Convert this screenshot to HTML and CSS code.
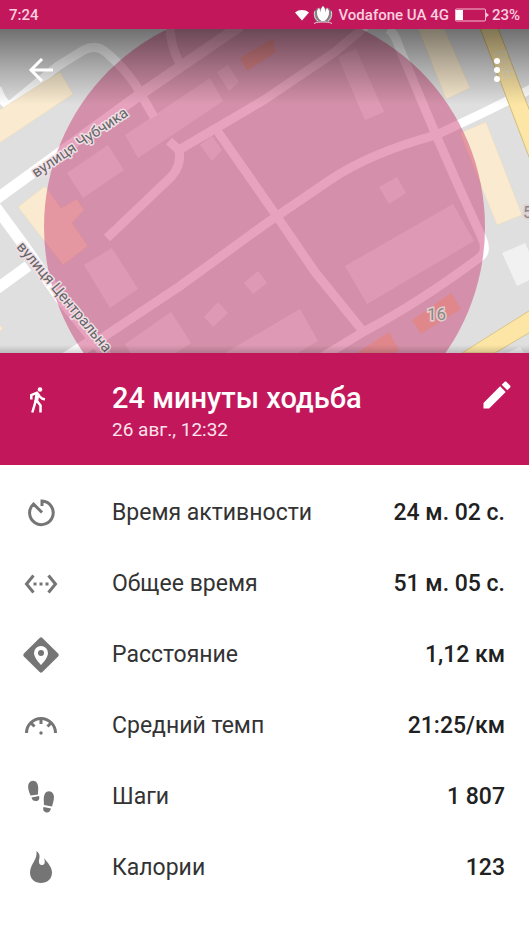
FILE: index.html
```
<!DOCTYPE html>
<html lang="ru">
<head>
  <meta charset="UTF-8">
  <meta name="viewport" content="width=device-width, initial-scale=1">
  <title>24 минуты ходьба</title>
  <link rel="stylesheet" href="styles.css">
</head>
<body>
  <div class="statusbar">
    <span class="time">7:24</span>
    <div class="status-right">
      <svg class="wifi" width="14" height="12" viewBox="0 0 14 12"><path d="M0 3.500C4 .2 10 .2 14 3.500L7 11.500z" fill="#fff"/></svg>
      <svg class="lotus" width="20" height="20" viewBox="0 0 20 20">
        <path d="M1 6Q0 14 4 17h12q4-3 3-11l-2-1-1-2-3 1-3-3-3 3-3-1-1 2z" fill="#8c7f86"/>
        <path d="M10 1c3 3 4 10 1 15H9C6 11 7 4 10 1z" fill="#fff"/>
        <path d="M6 2.500C3 7 4 13 8.500 16 7 11 8 6 6 2.500zM14 2.500c3 4.500 2 10.500-2.500 13.500 1.500-5 .5-10 2.500-13.500z" fill="#fff"/>
        <path d="M4 5c0 5 1 8 5 11h2c4-3 5-6 5-11l-3 2H7z" fill="#fff"/>
        <path d="M1.500 6.500C1 11 2 14 5 16M18.500 6.500C19 11 18 14 15 16M1 18.500c4-2 6-1 7-1.500h4c1 .5 3-.5 7 1.500" stroke="#e3d5db" fill="none"/>
      </svg>
      <span class="carrier">Vodafone UA 4G</span>
      <svg class="battery" width="34" height="14" viewBox="0 0 34 14">
        <rect x=".5" y="1" width="30" height="12" rx="1" fill="none" stroke="#f7bdd5"/>
        <rect x="1" y="2" width="7" height="10" fill="#fff"/>
        <path d="M31 4.500l3 2.500-3 2.500z" fill="#f7bdd5"/>
      </svg>
      <span>23%</span>
    </div>
  </div>

  <div class="map">
    <svg class="map-canvas" viewBox="0 29 529 324" preserveAspectRatio="xMidYMid slice">
      <defs>
        <linearGradient id="shade" x1="0" y1="0" x2="0" y2="1">
          <stop offset="0" stop-color="#000" stop-opacity=".5"/>
          <stop offset=".5" stop-color="#000" stop-opacity=".24"/>
          <stop offset="1" stop-color="#000" stop-opacity="0"/>
        </linearGradient>
        <linearGradient id="edge" x1="0" y1="0" x2="0" y2="1">
          <stop offset="0" stop-color="#000" stop-opacity="0"/>
          <stop offset="1" stop-color="#000" stop-opacity=".16"/>
        </linearGradient>
      </defs>
      <rect y="29" width="529" height="324" fill="#dfdfdf"/>

      <!-- buildings -->
      <g fill="#f1f1f1">
        <path d="M125 135L210 78l13 23-85 57z"/>
        <path d="M217 72l11-7 11 17-10 9z"/>
        <path d="M200 145l12-9 10 14-10 11z"/>
        <path d="M67 173l41-28 16 25-41 28z"/>
        <path d="M338 57l18-8 28 63-19 8z"/>
        <path d="M379 187l18-10 9 16-17 11z"/>
        <path d="M345 266l108-62 21 37-107 63z"/>
        <path d="M225 353l75-44 18 32-20 12z"/>
        <path d="M244 283l14-12 9 12-14 11z"/>
        <path d="M204 317l14-15 10 11-15 14z"/>
        <path d="M125 344l46-32 20 31-15 10h-46z"/>
        <path d="M84 265l28-17 26 41-28 19z"/>
        <path d="M502 253l23-10 15 32-23 11z"/>
        <path d="M507 353l13-6 4 6z"/>
      </g>

      <!-- roads -->
      <g class="roads">
        <path d="M-3 88Q4 108 12 104L58 66 84 50Q97 43 108 54 124 68 135 84L154 117"/>
        <path class="wide" d="M-5 200L142 93 240 26"/>
        <path d="M170 29Q171 47 180 64"/>
        <path d="M169 141L179 150 264 100 335 52 368 24"/>
        <path d="M179 150Q182 165 171 177L107 238"/>
        <path d="M218 132L278 218 315 272 362 330"/>
        <path d="M388 29Q395 33 399 47L436 135 458 185 482 238Q488 252 479 258 420 302 365 331L322 357"/>
        <path d="M535 87L485 112 436 135Q370 153 330 180L264 225 180 286 72 358"/>
        <path class="wide" d="M-5 206L25 247 60 298 110 360"/>
        <path class="wide" d="M-5 290L28 266"/>
        <path d="M60 360L88 342"/>
      </g>

      <g fill="#faebd0" stroke="#eadab8" stroke-width=".5">
        <path d="M-2 111L60 72l13 22L-2 144z"/>
        <path d="M18 207l27-21 16 22 16-9 7 11-12 13 16 23-25 19z"/>
        <path d="M418 28h26l26 60-24 11z"/>
        <path d="M460 133l26-11 36 93-25 10z"/>
        <path d="M-2 324l5 4-5 6z"/>
      </g>
      <g fill="#f3d0ae">
        <path d="M240 58l33-20 3 14-29 19z"/>
        <path d="M412 320l39-27 10 16-40 25z"/>
        <path d="M357 353l32-21 10 18-4 3z"/>
      </g>

      <path d="M480 28h18l36 94v48z" fill="#fde6a5" stroke="#d3bd7c"/>
      <path d="M462 353L532 309v22l-37 22z" fill="#fde6a5" stroke="#d8c58b"/>

      <circle cx="264.500" cy="227" r="220.500" fill="#c2185b" fill-opacity=".4"/>

      <g class="street">
        <text transform="translate(36 178) rotate(-34)">вулиця Чубчика</text>
        <text transform="translate(16 247) rotate(50)">вулиця Центральна</text>
      </g>
      <text class="house" x="427" y="320">16</text>
      <text class="house" x="523" y="218">5</text>
      <text class="route" transform="translate(494 52) rotate(70)">P06</text>

      <rect y="29" width="529" height="76" fill="url(#shade)"/>
      <rect y="345" width="529" height="8" fill="url(#edge)"/>
    </svg>

    <div class="toolbar">
      <button class="icon-btn" aria-label="Назад">
        <svg width="26" height="24" viewBox="0 0 26 24"><path d="M14 1L3 12l11 11M3 12h22" fill="none" stroke="#fff" stroke-width="3"/></svg>
      </button>
      <button class="icon-btn" aria-label="Ещё">
        <svg width="8" height="24" viewBox="0 0 8 24" fill="#fff"><circle cx="4" cy="3" r="3"/><circle cx="4" cy="12" r="3"/><circle cx="4" cy="21" r="3"/></svg>
      </button>
    </div>
  </div>

  <header class="summary">
    <div class="activity">
      <svg width="28" height="28" viewBox="0 0 28 28" fill="none" stroke="#fff" stroke-width="2.500">
        <circle cx="16" cy="3.500" r="2.300" fill="#fff" stroke="none"/>
        <path d="M7.300 13.500V9l5.700-2.300 2.700 3.800q2 2.500 5.300 2.800"/>
        <path d="M11.500 6.500L15.500 8 14 16l-4 1.500z" fill="#fff" stroke="none"/>
        <path d="M12 14L8.300 26.500M13 15l3.500 4.500v7"/>
      </svg>
    </div>
    <div class="headline">
      <h1>24 минуты ходьба</h1>
      <p>26 авг., 12:32</p>
    </div>
    <button class="icon-btn edit" aria-label="Изменить">
      <svg width="36" height="36" viewBox="0 0 24 24" fill="#fff"><path d="M3 17.250V21h3.750L17.810 9.940l-3.750-3.750L3 17.250zM20.710 7.040c.39-.39.39-1.020 0-1.410l-2.340-2.340c-.39-.39-1.020-.39-1.410 0l-1.830 1.830 3.750 3.750 1.830-1.830z"/></svg>
    </button>
  </header>

  <dl class="stats">
    <div class="stat">
      <dt>
        <svg width="36" height="36" viewBox="0 0 36 36"><path d="M19 17.500L10.500 9A11.800 11.800 0 1 0 19 6v5" fill="none" stroke="#757575" stroke-width="3"/></svg>
        Время активности
      </dt>
      <dd>24 м. 02 с.</dd>
    </div>
    <div class="stat">
      <dt>
        <svg width="36" height="36" viewBox="0 0 36 36"><path d="M10.500 9.500L3.500 18l7 8.500M25.500 9.500l7 8.500-7 8.500" fill="none" stroke="#757575" stroke-width="3"/><path d="M10.500 16.500h3v3h-3zM16.500 16.500h3v3h-3zM22.500 16.500h3v3h-3z" fill="#757575"/></svg>
        Общее время
      </dt>
      <dd>51 м. 05 с.</dd>
    </div>
    <div class="stat">
      <dt>
        <svg width="36" height="36" viewBox="0 0 36 36"><path d="M16.600.9q1.400-1.200 2.800 0l15.700 15.700q1.200 1.400 0 2.800L19.400 35.100q-1.400 1.200-2.800 0L.9 19.400q-1.200-1.400 0-2.800z" fill="#757575"/><path d="M18 9a7 7 0 0 0-7 7c0 5 7 12 7 12s7-7 7-12a7 7 0 0 0-7-7z" fill="#fff"/><circle cx="18" cy="16" r="3" fill="#757575"/></svg>
        Расстояние
      </dt>
      <dd>1,12 км</dd>
    </div>
    <div class="stat">
      <dt>
        <svg width="36" height="36" viewBox="0 0 36 36"><path d="M3.500 25a14.500 14.500 0 0 1 29 0" fill="none" stroke="#757575" stroke-width="3"/><path d="M18 11v5M7.500 14.500l4 4M28.500 14.500l-4 4" stroke="#757575" stroke-width="3"/><circle cx="18" cy="25" r="1.700" fill="#757575"/></svg>
        Средний темп
      </dt>
      <dd>21:25/км</dd>
    </div>
    <div class="stat">
      <dt>
        <svg width="36" height="36" viewBox="0 0 36 36" fill="#757575"><path d="M7.500 16.500C5.500 12 4.500 8 5.500 5 7 1 12 .5 14 4c2 4 1 7 1 11.500zM8.500 18.500l7.500-1.500c1 3-.5 5-3 5-2.300.2-4-1-4.500-3.500z"/><path d="M29 27.500c1.500-5 2.700-9 1.500-12-1.500-4-6.500-4.500-8.500-1-2 4-1 7-1 11.500zM28 29.500l-7.500-1.500c-1 3 .5 5 3 5.500 2.300.2 4-1.500 4.500-4z"/></svg>
        Шаги
      </dt>
      <dd>1 807</dd>
    </div>
    <div class="stat">
      <dt>
        <svg width="36" height="36" viewBox="0 0 36 36" fill="#757575"><path d="M13.500 1c3.500 2.500 3.500 5.500 2.500 9-.5 3 .5 5 3 5 2.700 0 3.500-2.500 2-7 3.500 4.500 8 9 8 14.500C29 29 24 33 18 33S7 29 7 22.500c0-4.500 2-7.500 4-11 1.800-3.500 3-6 2.500-10.500z"/></svg>
        Калории
      </dt>
      <dd>123</dd>
    </div>
  </dl>
</body>
</html>
```
FILE: styles.css
```
* { box-sizing: border-box; }
body { margin: 0; background: #fff; color: #333; font-family: Roboto, "Noto Sans", sans-serif; }
h1, p, dl, dd { margin: 0; }

.statusbar { display: flex; justify-content: space-between; align-items: center; height: 29px; padding: 0 9px; background: #c2185b; color: #fbcfe0; font-size: 15px; font-weight: 500; }
.status-right { display: flex; align-items: center; }
.wifi { margin-right: 4px; }
.lotus { margin-right: 6px; }
.battery { margin: 0 3px 0 6px; }

.map { position: relative; height: 324px; overflow: hidden; background: #dfdfdf; }
.map-canvas { display: block; width: 100%; height: 100%; }
.roads path { fill: none; stroke: #fff; stroke-width: 9; }
.roads .wide { stroke-width: 11; }
.street text { font-size: 15px; fill: #666; stroke: #f0dfe6; stroke-width: 3; stroke-linejoin: round; paint-order: stroke; }
.house { font-size: 17px; fill: #8e8684; stroke: #e0cfd0; stroke-width: 3; paint-order: stroke; }
.route { font-size: 17px; fill: #eee9da; fill-opacity: .8; }

.toolbar { position: absolute; top: 0; left: 0; right: 0; display: flex; justify-content: space-between; padding: 23px 28px; }
.icon-btn { display: flex; padding: 6px 0; border: none; background: none; cursor: pointer; }

.summary { display: flex; align-items: flex-start; padding: 24px 14px 24px 24px; background: #c2185b; color: #fff; }
.activity { width: 88px; padding-top: 9px; }
.activity svg { display: block; }
.headline { flex: 1; }
.headline h1 { font-size: 29px; line-height: 42px; font-weight: 500; }
.headline p { font-size: 19px; line-height: 22px; color: #fde3ed; }
.edit { padding: 0; }

.stats { padding: 12px 24px 24px 23px; }
.stat { display: flex; justify-content: space-between; align-items: center; height: 71px; font-size: 23px; }
.stat dt { display: flex; align-items: center; gap: 53px; }
.stat dd { font-weight: 500; color: #212121; }
```
